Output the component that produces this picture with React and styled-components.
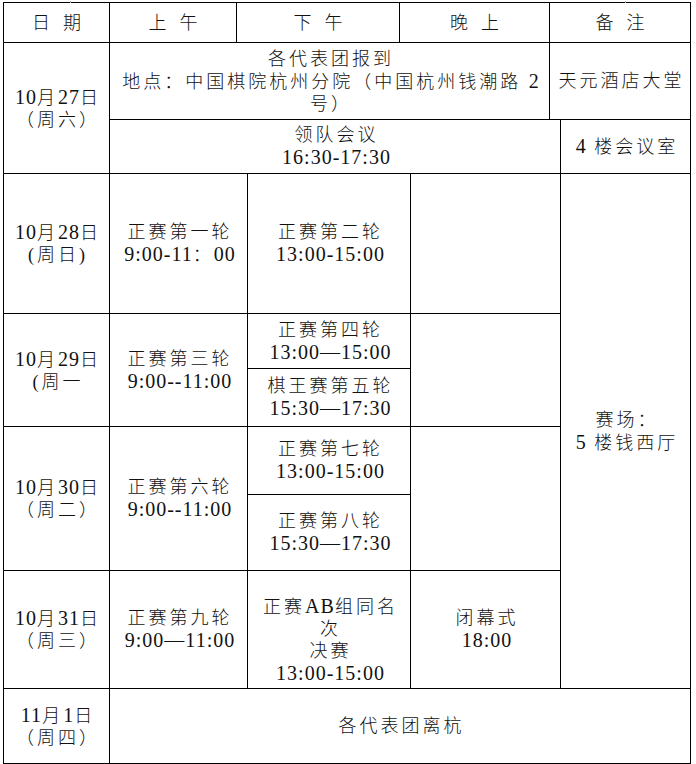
import styled, { createGlobalStyle } from "styled-components";

const GlobalStyle = createGlobalStyle`
  html, body {
    margin: 0;
    padding: 0;
    background: #fff;
  }
  body {
    font-family: "Liberation Serif", "Noto Sans CJK SC", serif;
    color: #111;
  }
`;

const Table = styled.div`
  position: relative;
  display: grid;
  grid-template-columns: 106px 127px 11px 152px 11px 139px 11px 130px;
  grid-template-rows: 40px 77px 54px 140px 55px 58px 68px 76px 118px 75px;
  width: max-content;
  margin: 2px 0 0 3px;
  border-top: 1px solid #000;
  border-left: 1px solid #000;

  &::before,
  &::after {
    content: "";
    position: absolute;
    top: -2px;
    width: 1px;
    height: 2px;
    background: #b8b8b8;
  }
  &::before {
    left: 66px;
  }
  &::after {
    left: 621px;
  }
`;

const Cell = styled.div`
  grid-column: ${(p) => p.$col};
  grid-row: ${(p) => p.$row};
  border-right: 1px solid #000;
  border-bottom: 1px solid #000;
  display: flex;
  flex-direction: column;
  align-items: center;
  justify-content: center;
  text-align: center;
  white-space: nowrap;
  font-size: 18px;
  font-weight: 300;
  line-height: 22px;
  letter-spacing: 3px;
  padding-left: 3px;
  padding-top: ${(p) => p.$shift || 0}px;
`;

const HeadCell = styled(Cell)`
  letter-spacing: 13px;
  padding-left: 13px;
`;

const Line = styled.span`
  display: block;
`;

// digits and latin letters run a touch larger and tighter, like the document font
const Latin = styled.span`
  font-size: 20px;
  font-weight: 400;
  letter-spacing: 1px;
`;

function Text({ lines }) {
  return lines.map((t, i) => (
    <Line key={i}>
      {t.split(/([0-9A-Za-z:\-—]+)/).map((part, j) =>
        j % 2 ? <Latin key={j}>{part}</Latin> : part
      )}
    </Line>
  ));
}

export default function App() {
  return (
    <>
      <GlobalStyle />
      <Table>
        <HeadCell $col="1" $row="1">日期</HeadCell>
        <HeadCell $col="2" $row="1">上午</HeadCell>
        <HeadCell $col="3 / 5" $row="1">下午</HeadCell>
        <HeadCell $col="5 / 7" $row="1">晚上</HeadCell>
        <HeadCell $col="7 / 9" $row="1">备注</HeadCell>

        <Cell $col="1" $row="2 / 4">
          <Text lines={["10月27日", "（周六）"]} />
        </Cell>
        <Cell $col="2 / 7" $row="2">
          <Text
            lines={[
              "各代表团报到",
              "地点：中国棋院杭州分院（中国杭州钱潮路 2",
              "号）",
            ]}
          />
        </Cell>
        <Cell $col="7 / 9" $row="2">天元酒店大堂</Cell>
        <Cell $col="2 / 8" $row="3">
          <Text lines={["领队会议", "16:30-17:30"]} />
        </Cell>
        <Cell $col="8" $row="3">
          <Text lines={["4 楼会议室"]} />
        </Cell>

        <Cell $col="1" $row="4">
          <Text lines={["10月28日", "(周日)"]} />
        </Cell>
        <Cell $col="2 / 4" $row="4">
          <Text lines={["正赛第一轮", "9:00-11：00"]} />
        </Cell>
        <Cell $col="4 / 6" $row="4">
          <Text lines={["正赛第二轮", "13:00-15:00"]} />
        </Cell>
        <Cell $col="6 / 8" $row="4" />
        <Cell $col="8" $row="4 / 10">
          <Text lines={["赛场：", "5 楼钱西厅"]} />
        </Cell>

        <Cell $col="1" $row="5 / 7">
          <Text lines={["10月29日", "(周一"]} />
        </Cell>
        <Cell $col="2 / 4" $row="5 / 7">
          <Text lines={["正赛第三轮", "9:00--11:00"]} />
        </Cell>
        <Cell $col="4 / 6" $row="5">
          <Text lines={["正赛第四轮", "13:00—15:00"]} />
        </Cell>
        <Cell $col="4 / 6" $row="6">
          <Text lines={["棋王赛第五轮", "15:30—17:30"]} />
        </Cell>
        <Cell $col="6 / 8" $row="5 / 7" />

        <Cell $col="1" $row="7 / 9">
          <Text lines={["10月30日", "（周二）"]} />
        </Cell>
        <Cell $col="2 / 4" $row="7 / 9">
          <Text lines={["正赛第六轮", "9:00--11:00"]} />
        </Cell>
        <Cell $col="4 / 6" $row="7">
          <Text lines={["正赛第七轮", "13:00-15:00"]} />
        </Cell>
        <Cell $col="4 / 6" $row="8">
          <Text lines={["正赛第八轮", "15:30—17:30"]} />
        </Cell>
        <Cell $col="6 / 8" $row="7 / 9" />

        <Cell $col="1" $row="9">
          <Text lines={["10月31日", "（周三）"]} />
        </Cell>
        <Cell $col="2 / 4" $row="9">
          <Text lines={["正赛第九轮", "9:00—11:00"]} />
        </Cell>
        <Cell $col="4 / 6" $row="9" $shift={20}>
          <Text lines={["正赛AB组同名", "次", "决赛", "13:00-15:00"]} />
        </Cell>
        <Cell $col="6 / 8" $row="9">
          <Text lines={["闭幕式", "18:00"]} />
        </Cell>

        <Cell $col="1" $row="10">
          <Text lines={["11月1日", "（周四）"]} />
        </Cell>
        <Cell $col="2 / 9" $row="10">各代表团离杭</Cell>
      </Table>
    </>
  );
}
